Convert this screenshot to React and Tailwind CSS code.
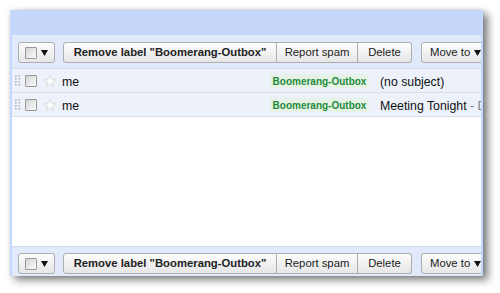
import React from "react";

const Tri = () => (
  <svg width="7" height="6" viewBox="0 0 7 6" className="block">
    <polygon points="0,0 7,0 3.5,6" fill="#111" />
  </svg>
);

const Check = ({ className = "" }) => (
  <div
    className={`w-[12px] h-[12px] shrink-0 border border-[#9a9a9a] rounded-[1px] bg-gradient-to-br from-[#d4d4d4] to-[#fbfbfb] ${className}`}
  />
);

const Dots = () => (
  <svg width="6" height="11" viewBox="0 0 6 11" className="block">
    {[0, 3, 6, 9].map((y) =>
      [0, 3.5].map((x) => (
        <rect key={`${x}-${y}`} x={x} y={y} width="1.6" height="1.6" fill="#b5b5b5" />
      ))
    )}
  </svg>
);

const Star = () => (
  <svg width="14" height="14" viewBox="0 0 24 24" className="block">
    <polygon
      points="12,2 14.9,8.6 22,9.3 16.6,14 18.2,21 12,17.3 5.8,21 7.4,14 2,9.3 9.1,8.6"
      fill="#fbfbfb"
      stroke="#d8d8d8"
      strokeWidth="1.6"
      strokeLinejoin="round"
    />
  </svg>
);

const btn =
  "h-[21px] flex items-center justify-center border border-[#adadad] bg-gradient-to-b from-[#fdfdfd] to-[#e6e6e6] text-[#222] text-[11.3px] shrink-0 whitespace-nowrap";

const Toolbar = ({ className }) => (
  <div className={`flex items-start pl-[6px] shrink-0 ${className}`}>
    <div className={`${btn} w-[37px] rounded-[3px] gap-[4px]`}>
      <Check className="bg-gradient-to-br from-[#cfcfcf] to-[#f8f8f8]" />
      <Tri />
    </div>
    <div className="flex ml-[8px] shrink-0">
      <div className={`${btn} w-[214px] rounded-l-[3px] font-bold`}>
        Remove label "Boomerang-Outbox"
      </div>
      <div className={`${btn} w-[81px] border-l-0`}>Report spam</div>
      <div className={`${btn} w-[54px] border-l-0 rounded-r-[3px]`}>Delete</div>
    </div>
    <div className={`${btn} w-[72px] ml-[9px] rounded-l-[3px] justify-start pl-[8px] gap-[4px]`}>
      <span>Move to</span>
      <Tri />
    </div>
  </div>
);

const Row = ({ subject, snippet }) => (
  <div className="h-[24px] flex items-center bg-[#edf1f9] border-b border-[#d9dfea] shrink-0 text-[12.3px] text-[#111] overflow-hidden">
    <div className="ml-[3px] w-[10px] shrink-0">
      <Dots />
    </div>
    <Check />
    <div className="ml-[6px] shrink-0">
      <Star />
    </div>
    <div className="ml-[5px] w-[206px] pt-[3px] shrink-0">me</div>
    <div className="w-[103px] flex justify-center shrink-0">
      <span className="px-[3px] bg-[#e6f2e6] text-[#1d8a3c] text-[10px] font-bold leading-[13px] pt-[1px] whitespace-nowrap">
        Boomerang-Outbox
      </span>
    </div>
    <div className="ml-[9px] whitespace-nowrap pt-[3px] shrink-0">
      {subject}
      {snippet && <span className="text-[#7a7a7a]"> - D</span>}
    </div>
  </div>
);

export default function App() {
  return (
    <div
      className="w-[500px] h-[293px] bg-white pt-[10px] pl-[10px] overflow-hidden"
      style={{ fontFamily: '"Liberation Sans", Arial, sans-serif' }}
    >
      <div className="w-[473px] h-[266px] flex flex-col overflow-hidden bg-white border-x-2 border-[#c3d9ff] shadow-[5px_4px_8px_rgba(0,0,0,0.5),0_0_4px_rgba(0,0,0,0.12)]">
        <div className="h-[25px] bg-[#c6d8fa] shrink-0" />
        <Toolbar className="h-[34px] pt-[7px] bg-[#e1eafb] border-b border-[#d3dcec]" />
        <Row subject="(no subject)" />
        <Row subject="Meeting Tonight" snippet />
        <div className="flex-1 bg-white" />
        <Toolbar className="h-[30px] pt-[6px] bg-[#e1eafb] border-t border-[#d3dcec]" />
      </div>
    </div>
  );
}
